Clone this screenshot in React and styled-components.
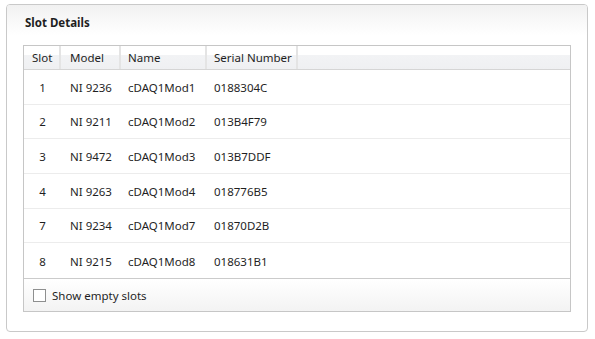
import styled, { createGlobalStyle } from "styled-components";

const GlobalStyle = createGlobalStyle`
  body {
    margin: 0;
    background: #ffffff;
    font-family: "Noto Sans", "Open Sans", sans-serif;
    color: #1f1f1f;
  }
`;

const slots = [
  { slot: 1, model: "NI 9236", name: "cDAQ1Mod1", serial: "0188304C" },
  { slot: 2, model: "NI 9211", name: "cDAQ1Mod2", serial: "013B4F79" },
  { slot: 3, model: "NI 9472", name: "cDAQ1Mod3", serial: "013B7DDF" },
  { slot: 4, model: "NI 9263", name: "cDAQ1Mod4", serial: "018776B5" },
  { slot: 7, model: "NI 9234", name: "cDAQ1Mod7", serial: "01870D2B" },
  { slot: 8, model: "NI 9215", name: "cDAQ1Mod8", serial: "018631B1" },
];

export default function App() {
  return (
    <>
      <GlobalStyle />
      <Page>
        <Panel>
          <PanelHeader>Slot Details</PanelHeader>
          <Grid>
            <HeaderRow>
              <HeadCell $w={37}>Slot</HeadCell>
              <HeadCell $w={60} $pad={9}>Model</HeadCell>
              <HeadCell $w={86} $pad={7}>Name</HeadCell>
              <HeadCell $w={91} $pad={7}>Serial Number</HeadCell>
              <Filler />
            </HeaderRow>
            <Body>
              {slots.map((s) => (
                <Row key={s.slot}>
                  <Cell $w={37} $center>{s.slot}</Cell>
                  <Cell $w={60} $pad={9}>{s.model}</Cell>
                  <Cell $w={86} $pad={7}>{s.name}</Cell>
                  <Cell $w={91} $pad={7}>{s.serial}</Cell>
                </Row>
              ))}
            </Body>
            <Footer>
              <CheckBox />
              <span>Show empty slots</span>
            </Footer>
          </Grid>
        </Panel>
      </Page>
    </>
  );
}

const Page = styled.div`
  padding: 4px 7px 7px 6px;
  width: 595px;
  height: 339px;
  box-sizing: border-box;
`;

const Panel = styled.div`
  border: 1px solid #c9c9c9;
  border-radius: 4px;
  height: 328px;
  box-sizing: border-box;
  display: flex;
  flex-direction: column;
  background: #ffffff;
  overflow: hidden;
`;

const PanelHeader = styled.div`
  height: 30px;
  box-sizing: border-box;
  padding: 10px 18px 0;
  font-size: 11.5px;
  font-weight: 700;
  line-height: 16px;
  background: linear-gradient(#f1f1f1, #ffffff);
`;

const Grid = styled.div`
  margin: 10px 16px 19px 16px;
  border: 1px solid #c6c6c6;
  display: flex;
  flex-direction: column;
  flex: 1;
  font-size: 11.5px;
  white-space: nowrap;
`;

const HeaderRow = styled.div`
  display: flex;
  height: 24px;
  box-sizing: border-box;
  border-bottom: 1px solid #d5d5d5;
  background: linear-gradient(#ffffff 0%, #ffffff 40%, #f2f3f5 41%, #eff0f2 100%);
`;

const HeadCell = styled.div`
  width: ${(p) => p.$w}px;
  box-sizing: border-box;
  padding-left: ${(p) => p.$pad ?? 8}px;
  padding-top: 1px;
  border-right: 2px solid #e4e4e4;
  display: flex;
  align-items: center;
  line-height: 16px;
`;

const Filler = styled.div`
  flex: 1;
`;

const Body = styled.div`
  flex: 1;
  display: flex;
  flex-direction: column;
`;

const Row = styled.div`
  display: flex;
  height: 34.67px;
  box-sizing: border-box;
  border-bottom: 1px solid #ececec;
  padding-top: 1px;
  &:last-child {
    border-bottom: none;
  }
`;

const Cell = styled.div`
  width: ${(p) => p.$w}px;
  box-sizing: border-box;
  padding-left: ${(p) => (p.$center ? 0 : p.$pad)}px;
  display: flex;
  align-items: center;
  justify-content: ${(p) => (p.$center ? "center" : "flex-start")};
`;

const Footer = styled.div`
  height: 33px;
  box-sizing: border-box;
  border-top: 1px solid #cbcbcb;
  background: linear-gradient(#ffffff, #f3f3f3);
  display: flex;
  align-items: center;
  padding-left: 9px;
  gap: 6px;
`;

const CheckBox = styled.span`
  width: 13px;
  height: 13px;
  box-sizing: border-box;
  border: 1px solid #8e8f8f;
  background: #ffffff;
`;
